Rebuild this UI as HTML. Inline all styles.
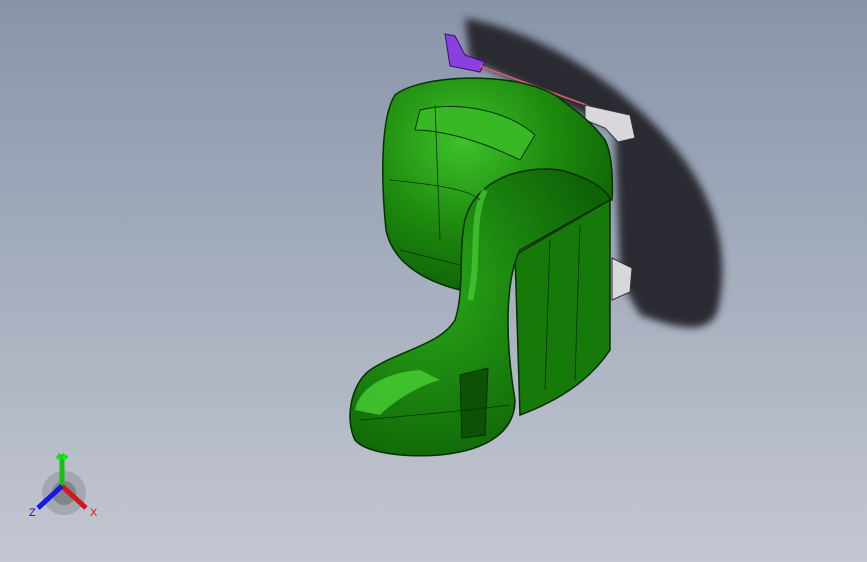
<!DOCTYPE html>
<html><head><style>
html,body{margin:0;padding:0;width:867px;height:562px;overflow:hidden}
body{background:linear-gradient(180deg,#8894a9 0%,#a3acbc 45%,#c3c7d1 100%)}
svg{position:absolute;left:0;top:0}
</style></head><body>
<svg width="867" height="562" viewBox="0 0 867 562">
<defs>
<radialGradient id="g1" cx="0.35" cy="0.3" r="0.8">
<stop offset="0" stop-color="#3fc22a"/><stop offset="0.5" stop-color="#1d8a0e"/><stop offset="1" stop-color="#0c5a05"/>
</radialGradient>
<radialGradient id="g2" cx="0.3" cy="0.4" r="0.7">
<stop offset="0" stop-color="#2aa818"/><stop offset="1" stop-color="#0e6207"/>
</radialGradient>
<filter id="b"><feGaussianBlur stdDeviation="4"/></filter>
</defs>
<!-- shadow -->
<path d="M465 18 C530 30 600 70 650 120 C700 170 735 230 718 310 C710 335 680 330 640 315 L620 280 L615 130 L470 60 Z" fill="#2a2c31" filter="url(#b)"/>
<!-- accessories -->
<path d="M445 34 L455 36 L465 55 L485 62 L480 72 L450 66 Z" fill="#8a3fe0" stroke="#3a1070"/>
<line x1="480" y1="66" x2="600" y2="110" stroke="#e06060" stroke-width="1.5"/>
<path d="M585 105 L630 115 L635 138 L618 142 L605 128 L585 120 Z" fill="#d8d8dc" stroke="#333"/>
<path d="M612 258 L632 268 L630 292 L612 300 Z" fill="#d8d8dc" stroke="#333"/>
<!-- back -->
<path d="M395 95 C420 75 510 70 555 95 C575 110 590 120 605 140 C615 160 612 200 612 200 L525 175 C500 180 470 200 465 240 L460 290 C420 280 392 260 386 230 C380 170 382 115 395 95 Z" fill="url(#g1)" stroke="#063000" stroke-width="1.5"/>
<path d="M420 110 C460 100 510 112 535 135 L520 160 C480 140 440 130 415 130 Z" fill="#39b825" stroke="#063000"/>
<!-- side panel -->
<path d="M515 255 L610 200 L610 350 C590 380 560 400 520 415 Z" fill="#167a0a" stroke="#063000" stroke-width="1.5"/>
<!-- seat -->
<path d="M465 220 C475 180 520 165 560 170 C590 178 608 190 610 200 L520 250 C505 280 505 340 515 400 C515 430 490 450 440 455 C400 458 365 452 355 440 C345 420 350 385 370 370 C400 350 440 345 455 320 C465 290 458 250 465 220 Z" fill="url(#g2)" stroke="#063000" stroke-width="1.5"/>
<path d="M355 410 C360 385 390 372 420 370 L440 380 C420 385 395 400 380 415 Z" fill="#48d035" opacity="0.8"/>
<path d="M485 190 C470 220 480 260 470 300" stroke="#50d83a" stroke-width="6" fill="none" opacity="0.6"/>
<path d="M460 375 L488 368 L485 435 L462 438 Z" fill="#0b5204" stroke="#063000"/>
<g stroke="#063000" fill="none" stroke-width="0.8">
<path d="M390 180 C440 185 470 190 480 200"/><path d="M400 250 C420 255 440 260 460 265"/>
<path d="M435 105 L440 240"/><path d="M360 420 C420 415 470 410 510 405"/>
<path d="M550 240 L545 390"/><path d="M580 225 L575 380"/>
</g>
<!-- triad -->
<circle cx="64" cy="493" r="22" fill="#8a8d94" opacity="0.5"/>
<circle cx="64" cy="493" r="12" fill="#606268" opacity="0.5"/>
<line x1="62" y1="486" x2="62" y2="458" stroke="#18c018" stroke-width="5"/>
<ellipse cx="62" cy="457" rx="6" ry="3" fill="#20e020"/>
<line x1="62" y1="486" x2="86" y2="508" stroke="#d01818" stroke-width="5"/>
<line x1="62" y1="486" x2="38" y2="508" stroke="#1818e0" stroke-width="5"/>
<text x="58" y="460" font-family="Liberation Sans" font-size="10" fill="#10c010">Y</text>
<text x="90" y="516" font-family="Liberation Sans" font-size="11" fill="#e01010">X</text>
<text x="29" y="516" font-family="Liberation Sans" font-size="11" fill="#1010e0">Z</text>
</svg>
</body></html>
